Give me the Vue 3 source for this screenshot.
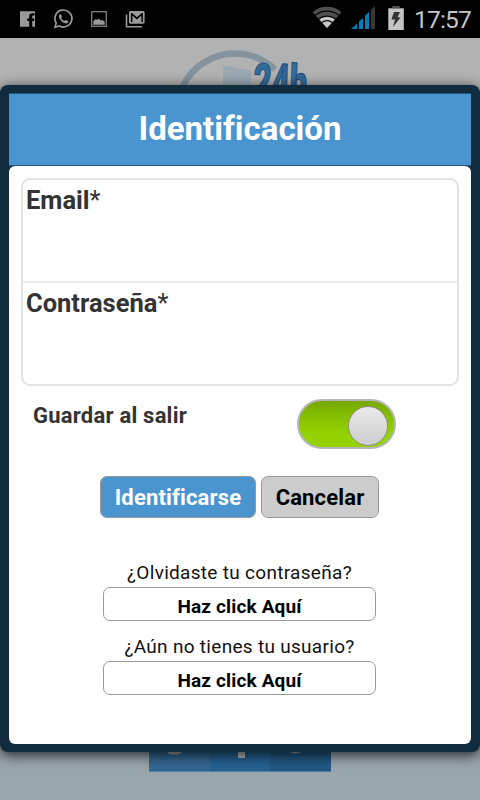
<template>
  <div class="pantalla">
    <header class="barra-estado">
      <div class="notificaciones">
        <svg width="180" height="38" viewBox="0 0 180 38">
          <path fill="#999" fill-rule="evenodd" d="M20 11.300h15v15.500h-2.800v-5.700h2v-2.600h-2v-1.700c0-.9.400-1.200 1.300-1.200h1v-2.300h-2c-2.300 0-3.300 1.100-3.300 3.100v2.100h-2v2.600h2v5.700H20z" />
          <path fill="none" stroke="#999" stroke-width="1.700" d="M55 27.300l1.200-4.300a8.500 8.500 0 1 1 3.200 3z" />
          <path fill="#999" d="M60 14.300c-1.800 1-1.200 3.700.7 6 2 2.500 5.300 4.300 7.200 2.100.6-.7.400-1.300.1-1.500l-2.100-1c-.5-.2-.8.800-1.400 1.100-1.600-.5-2.700-1.700-3.400-3 .3-.5 1-.9.700-1.500l-.8-1.900c-.2-.4-.6-.4-1-.3z" />
          <rect x="91.700" y="11.700" width="14.600" height="14.600" fill="none" stroke="#777" stroke-width="1.400" />
          <path fill="#999" d="M93.300 24.700v-3.400l2.500-2.200 1.300 1 1.500-1.500 2 1.800 1.600-.5 2.500 1.800v3z" />
          <path fill="#999" d="M125.700 14.500h1.600v11.400h14.700v1.700h-14.800c-1 0-1.500-.5-1.500-1.500z" />
          <path fill="#999" fill-rule="evenodd" d="M130.500 11H143c1 0 1.600.6 1.600 1.500V22c0 1-.6 1.700-1.600 1.700h-12.500c-.9 0-1.500-.7-1.500-1.700v-9.500c0-.9.600-1.500 1.500-1.500zm.4 2.200v8.800h1.500v-6.400l4.500 4 4.500-4V22h1.500v-8.800h-1.500l-4.500 4-4.500-4z" />
        </svg>
      </div>
      <div class="sistema">
        <svg width="100" height="38" viewBox="310 0 100 38">
          <path fill="#505050" d="M312.700 12.200C320.500 5 333.500 5 341.500 12.200L327 28z" />
          <path fill="none" stroke="#050505" stroke-width="1.200" d="M315 15.300c7-5.700 17-5.700 24.100 0" />
          <path fill="#c9c9c9" d="M319.300 19.400c4.800-3.800 10.700-3.800 15.500 0L327 28z" />
          <path fill="none" stroke="#050505" stroke-width="1.200" d="M318.400 18.900c5.200-3.800 12.200-3.800 17.400 0M321.700 22.500c3.300-2.200 7.400-2.200 10.700 0" />
          <path fill="#007fba" d="M351 29l6-5.300V29zM359 29v-7.500l4-3.500v11zM365 29V15.700l4-4V29z" />
          <path fill="#383838" d="M371 29V10l4-4v23z" />
          <path fill="#c5c5c5" d="M388.300 8.300h15.500V30h-15.500z" />
          <path fill="#505050" d="M392.300 6h7.500v2.300h-7.500z" />
          <path fill="#333" d="M394 12h6l-2.500 5.300h3.200L393 27l2-7.600h-3.600z" />
        </svg>
        <span class="hora">17:57</span>
      </div>
    </header>

    <main class="fondo">
      <svg class="logo" width="180" height="60" viewBox="150 38 180 60">
        <path fill="none" stroke="#84939d" stroke-width="6.500" d="M177 111.500a58 58 0 0 1 98-42" />
        <path fill="#9ba9b2" d="M223 67q0-1.500 2-1l24 4q2 .5 2 3v25h-28z" />
        <text x="253" y="98" class="logo-texto" textLength="54" lengthAdjust="spacingAndGlyphs" transform="rotate(2 254 98)">24h</text>
      </svg>
      <svg class="pie" width="182" height="40" viewBox="149 732 182 40">
        <path fill="#336791" d="M149 732h61v40h-61z" />
        <path fill="#266191" d="M210 732h60v40h-60z" />
        <path fill="#215985" d="M270 732h61v40h-61z" />
        <circle cx="174.500" cy="740" r="14.500" fill="#aaa" />
        <path fill="#bbb" d="M238 732h7v26h-7z" />
        <circle cx="295.500" cy="743" r="10.500" fill="#aaa" />
        <path fill="#6b94b3" opacity=".6" d="M149 771h182v1H149z" />
      </svg>
    </main>

    <section class="dialogo" role="dialog">
      <h1 class="titulo"><span>Identificación</span></h1>
      <form class="contenido" @submit.prevent>
        <div class="campos">
          <label v-for="campo in campos" :key="campo.id" class="campo">
            <span class="etiqueta">{{ campo.texto }}<span class="requerido">*</span></span>
            <input v-model="campo.valor" :type="campo.tipo" class="entrada">
          </label>
        </div>

        <div class="fila-guardar">
          <span class="texto-guardar">Guardar al salir</span>
          <button type="button" class="interruptor" :class="{ activo: guardar }" @click="guardar = !guardar">
            <span class="perilla"></span>
          </button>
        </div>

        <div class="acciones">
          <button type="submit" class="boton identificarse"><span>Identificarse</span></button>
          <button type="button" class="boton cancelar"><span>Cancelar</span></button>
        </div>

        <div v-for="enlace in enlaces" :key="enlace" class="ayuda">
          <p>{{ enlace }}</p>
          <button type="button" class="boton-ayuda">Haz click Aquí</button>
        </div>
      </form>
    </section>
  </div>
</template>

<script setup>
import { ref } from 'vue';

const campos = ref([
  { id: 'email', texto: 'Email', tipo: 'email', valor: '' },
  { id: 'clave', texto: 'Contraseña', tipo: 'password', valor: '' },
]);

const enlaces = ['¿Olvidaste tu contraseña?', '¿Aún no tienes tu usuario?'];

const guardar = ref(true);
</script>

<style>
body {
  margin: 0;
  overflow: hidden;
}
</style>

<style scoped>
* {
  box-sizing: border-box;
}

.pantalla {
  position: relative;
  width: 480px;
  height: 800px;
  overflow: hidden;
  display: flex;
  flex-direction: column;
  font-family: Roboto, sans-serif;
  font-variant-ligatures: none;
}

.barra-estado {
  height: 38px;
  background: #000;
  display: flex;
  justify-content: space-between;
}

.notificaciones,
.sistema {
  display: flex;
}

.barra-estado svg {
  display: block;
}

.hora {
  width: 70px;
  padding-left: 4px;
  color: #c4c4c4;
  font-size: 24.5px;
  letter-spacing: -0.8px;
  line-height: 40px;
  white-space: nowrap;
}

.fondo {
  flex: 1;
  display: flex;
  flex-direction: column;
  justify-content: space-between;
  align-items: center;
  padding-bottom: 28px;
  background: linear-gradient(#b2b2b2 10%, #9aa6ad 90%);
}

.logo-texto {
  font-family: Roboto, sans-serif;
  font-size: 49px;
  font-weight: 900;
  fill: #336b9b;
  stroke: #254f7d;
  stroke-width: 1.2px;
}

.dialogo {
  position: absolute;
  top: 85px;
  left: 0;
  width: 480px;
  height: 667px;
  padding: 9px 9px 8px;
  display: flex;
  flex-direction: column;
  background: #112c3f;
  border-radius: 8px;
  box-shadow: 0 3px 14px rgba(0, 0, 0, 0.8);
}

.titulo {
  height: 71px;
  margin: 0 0 1px;
  background: #4a95d0;
  box-shadow: 0 0 0 1px #28597f;
  clip-path: inset(-1px 0);
  color: #fff;
  font-size: 33px;
  font-weight: bold;
  line-height: 70px;
  text-align: center;
}

.contenido {
  flex: 1;
  padding: 12px 12px 0;
  display: flex;
  flex-direction: column;
  background: #fff;
  border-radius: 6px;
}

.campos {
  height: 208px;
  border: 2px solid #e3e3e3;
  border-radius: 9px;
}

.campo {
  display: flex;
  flex-direction: column;
  height: 101px;
  padding: 3px 3px 0;
}

.campo + .campo {
  height: 103px;
  border-top: 2px solid #ebebeb;
}

.etiqueta {
  color: #333;
  font-size: 25.5px;
  font-weight: bold;
  line-height: 34px;
}

.requerido {
  font-weight: normal;
}

.entrada {
  flex: 1;
  min-height: 0;
  border: none;
  outline: none;
  background: transparent;
}

.fila-guardar {
  height: 50px;
  margin-top: 13px;
  padding: 0 63px 0 12px;
  display: flex;
  justify-content: space-between;
}

.texto-guardar {
  color: #333;
  font-size: 22px;
  font-weight: bold;
  letter-spacing: 0.22px;
  line-height: 34px;
}

.interruptor {
  width: 99px;
  height: 50px;
  padding: 5px 6px;
  display: flex;
  border: 2px solid #b5b5b5;
  border-radius: 25px;
  background: #aaa;
}

.interruptor.activo {
  justify-content: flex-end;
  background: linear-gradient(#76a800, #86c000 35%, #94d300 75%);
}

.perilla {
  width: 40px;
  height: 40px;
  flex-shrink: 0;
  border: 1px solid #8c8c8c;
  border-radius: 50%;
  background: linear-gradient(#e9e9e9, #cecece);
}

.acciones {
  display: flex;
  gap: 5px;
  margin: 27px 0 39px 79px;
}

.boton {
  height: 42px;
  padding: 1px 0 0;
  border: 1px solid #999;
  border-radius: 7px;
  font: bold 22px/39px Roboto, sans-serif;
  font-variant-ligatures: none;
  letter-spacing: 0.15px;
}

.identificarse {
  width: 156px;
  background: #4a95d0;
  color: #fff;
}

.cancelar {
  width: 118px;
  background: #ccc;
  color: #000;
}

.ayuda {
  width: 273px;
  height: 74px;
  margin-left: 82px;
}

.ayuda p {
  margin: 0;
  height: 30px;
  color: #111;
  font-size: 19px;
  letter-spacing: 0.3px;
  line-height: 32px;
  text-align: center;
  white-space: nowrap;
}

.boton-ayuda {
  display: block;
  width: 273px;
  height: 34px;
  padding: 5px 0 0;
  border: 1px solid #999;
  border-radius: 7px;
  background: #fff;
  color: #000;
  font: bold 19px/27px Roboto, sans-serif;
  letter-spacing: 0.15px;
}
</style>
